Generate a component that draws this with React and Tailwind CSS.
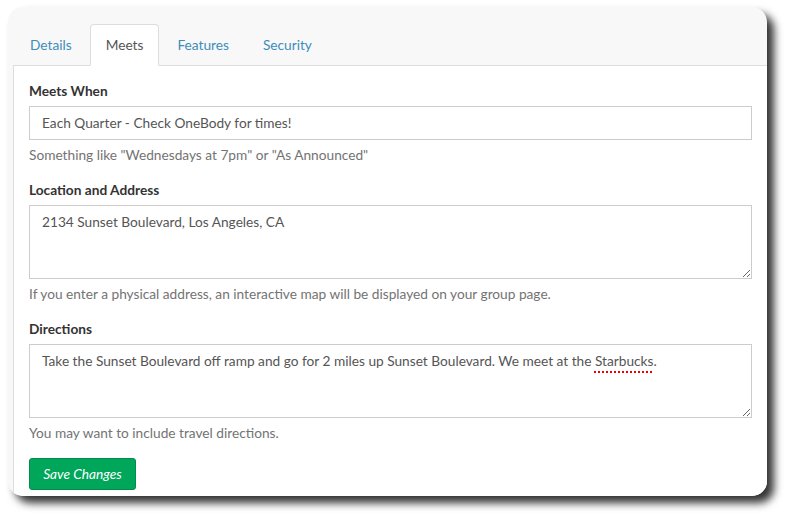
export default function App() {
  const tabs = ["Details", "Meets", "Features", "Security"];
  return (
    <div className="w-[790px] h-[520px] bg-white pt-[7px] pl-[8px] font-['Lato','Noto_Sans',sans-serif] text-[13.7px] leading-5">
      <div className="w-[759px] h-[489px] bg-[#f8f8f8] rounded-[15px] shadow-[7px_7px_8px_rgba(0,0,0,0.8)] flex flex-col pl-[5px] pt-[17px] overflow-hidden">
        <ul className="flex border-b border-[#ddd] pl-px">
          {tabs.map((t) =>
            t === "Meets" ? (
              <li
                key={t}
                className="-mb-px mr-[2px] px-[15px] py-[10px] bg-white border border-[#ddd] border-b-white rounded-t-[4px] text-[#555]"
              >
                {t}
              </li>
            ) : (
              <li
                key={t}
                className="-mb-px mr-[2px] px-[15px] py-[10px] border border-transparent text-[#3c8dbc]"
              >
                {t}
              </li>
            )
          )}
        </ul>
        <div className="flex-1 bg-white border-l border-[#ddd] pl-[15px] pr-[15px] pt-[15px] flex flex-col">
          <label className="block font-bold text-[#333] mb-[5px]">Meets When</label>
          <div className="h-[34px] border border-[#ccc] px-[12px] py-[6px] text-[#555]">
            Each Quarter - Check OneBody for times!
          </div>
          <p className="mt-[5px] text-[#737373]">Something like "Wednesdays at 7pm" or "As Announced"</p>

          <label className="block font-bold text-[#333] mt-[15px] mb-[5px]">Location and Address</label>
          <div className="h-[74px] border border-[#ccc] px-[12px] py-[6px] text-[#555] resize overflow-auto">
            2134 Sunset Boulevard, Los Angeles, CA
          </div>
          <p className="mt-[5px] text-[#737373]">
            If you enter a physical address, an interactive map will be displayed on your group page.
          </p>

          <label className="block font-bold text-[#333] mt-[15px] mb-[5px]">Directions</label>
          <div className="h-[74px] border border-[#ccc] px-[12px] py-[6px] text-[#555] resize overflow-auto">
            Take the Sunset Boulevard off ramp and go for 2 miles up Sunset Boulevard. We meet at the{" "}
            <span className="underline decoration-dotted decoration-[#e00] decoration-2 underline-offset-[5px]">Starbucks</span>.
          </div>
          <p className="mt-[5px] text-[#737373]">You may want to include travel directions.</p>

          <div className="mt-[15px]">
            <button className="w-[107px] h-[32px] bg-[#00a65a] border border-[#008d4c] rounded-[3px] text-white italic">
              Save Changes
            </button>
          </div>
        </div>
      </div>
    </div>
  );
}
